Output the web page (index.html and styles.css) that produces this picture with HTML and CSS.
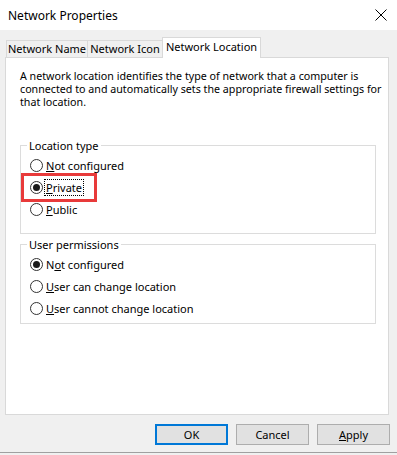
FILE: index.html
```html
<!DOCTYPE html>
<html lang="en">
<head>
    <meta charset="UTF-8">
    <title>Network Properties</title>
    <link rel="stylesheet" href="styles.css">
</head>
<body>
    <div class="window">
        <div class="titlebar">
            <span class="title">Network Properties</span>
            <svg class="close" width="12" height="12" viewBox="0 0 12 12">
                <path d="M0.5 0.5 L11.5 11.5 M11.5 0.5 L0.5 11.5" stroke="#000" stroke-width="1" fill="none"/>
            </svg>
        </div>
        <div class="tabs">
            <div class="tab tab-name">Network Name</div>
            <div class="tab tab-icon">Network Icon</div>
            <div class="tab tab-location selected">Network Location</div>
        </div>
        <div class="panel">
            <p class="intro">
                <span class="line">A network location identifies the type of network that a computer is</span>
                <span class="line">connected to and automatically sets the appropriate firewall settings for</span>
                <span class="line">that location.</span>
            </p>
            <fieldset class="group first">
                <legend>Location type</legend>
                <div class="option"><span class="radio"></span><span class="label"><u>N</u>ot configured</span></div>
                <div class="option marked"><span class="radio checked"></span><span class="label focus"><u>P</u>rivate</span></div>
                <div class="option"><span class="radio"></span><span class="label"><u>P</u>ublic</span></div>
            </fieldset>
            <fieldset class="group second">
                <legend>User permissions</legend>
                <div class="option"><span class="radio checked"></span><span class="label">N<u>o</u>t configured</span></div>
                <div class="option"><span class="radio"></span><span class="label"><u>U</u>ser can change location</span></div>
                <div class="option"><span class="radio"></span><span class="label"><u>U</u>ser cannot change location</span></div>
            </fieldset>
        </div>
        <div class="buttons">
            <button class="btn default">OK</button>
            <button class="btn">Cancel</button>
            <button class="btn"><u>A</u>pply</button>
        </div>
    </div>
</body>
</html>
```
FILE: styles.css
```css
html, body {
    margin: 0;
    background: #f0f0f0;
}
body {
    font-family: "Noto Sans", "Open Sans", sans-serif;
    font-size: 11px;
    color: #000;
}
.window {
    width: 397px;
    height: 455px;
    box-sizing: border-box;
    display: flex;
    flex-direction: column;
}
.titlebar {
    height: 30px;
    background: #fff;
    display: flex;
    align-items: center;
    justify-content: space-between;
    padding: 0 10px 0 8px;
    font-size: 12px;
}
.close {
    display: block;
}
.tabs {
    display: flex;
    align-items: flex-end;
    height: 20px;
    margin-top: 7px;
    padding-left: 6px;
}
.tab {
    box-sizing: border-box;
    height: 17px;
    line-height: 16px;
    text-align: center;
    border: 1px solid #d9d9d9;
    border-bottom: none;
    background: #f0f0f0;
}
.tab-name {
    width: 82px;
}
.tab-icon {
    width: 76px;
    margin-left: -1px;
}
.tab-location {
    width: 99px;
    margin-left: -1px;
}
.tab.selected {
    height: 21px;
    line-height: 18px;
    background: #fff;
    margin-bottom: -1px;
    position: relative;
    z-index: 1;
}
.panel {
    box-sizing: border-box;
    width: 384px;
    height: 358px;
    margin-left: 5px;
    border: 1px solid #d9d9d9;
    background: #fff;
    padding: 12px 12px 0 14px;
}
.intro {
    margin: 0;
    font-size: 10.7px;
    white-space: nowrap;
}
.intro .line {
    display: block;
    height: 13px;
    line-height: 13px;
}
.group {
    margin: 0;
    border: 1px solid #dcdcdc;
    padding: 0 8px 0 6px;
}
.group legend {
    padding: 0 2px;
    line-height: 17px;
}
.group.first {
    margin-top: 28px;
    padding-bottom: 13px;
}
.group.second {
    margin-top: 2px;
    padding-bottom: 4px;
}
.option {
    height: 22px;
    display: flex;
    align-items: center;
    margin-left: 3px;
}
.option.marked {
    position: relative;
}
.option.marked::after {
    content: "";
    position: absolute;
    left: -9px;
    top: -3px;
    width: 76px;
    height: 29px;
    box-sizing: border-box;
    border: 3px solid #e83a3a;
}
.radio {
    box-sizing: border-box;
    width: 13px;
    height: 13px;
    border: 1px solid #333;
    border-radius: 50%;
    background: #fff;
    margin-right: 1px;
    display: flex;
    align-items: center;
    justify-content: center;
}
.radio.checked::before {
    content: "";
    width: 7px;
    height: 7px;
    border-radius: 50%;
    background: #1a1a1a;
}
.label {
    line-height: 15px;
    border: 1px dotted transparent;
    padding: 0 1px;
}
.label.focus {
    border-color: #000;
}
.buttons {
    display: flex;
    justify-content: flex-end;
    gap: 8px;
    margin-top: 9px;
    padding-right: 7px;
    height: 21px;
    padding-bottom: 7px;
    border-bottom: 1px solid #a0a0a0;
}
.btn {
    box-sizing: border-box;
    width: 73px;
    height: 21px;
    padding: 0;
    font-family: inherit;
    font-size: 11px;
    color: #000;
    background: #e1e1e1;
    border: 1px solid #adadad;
    border-radius: 0;
}
.btn.default {
    border: 2px solid #0078d7;
}
```
